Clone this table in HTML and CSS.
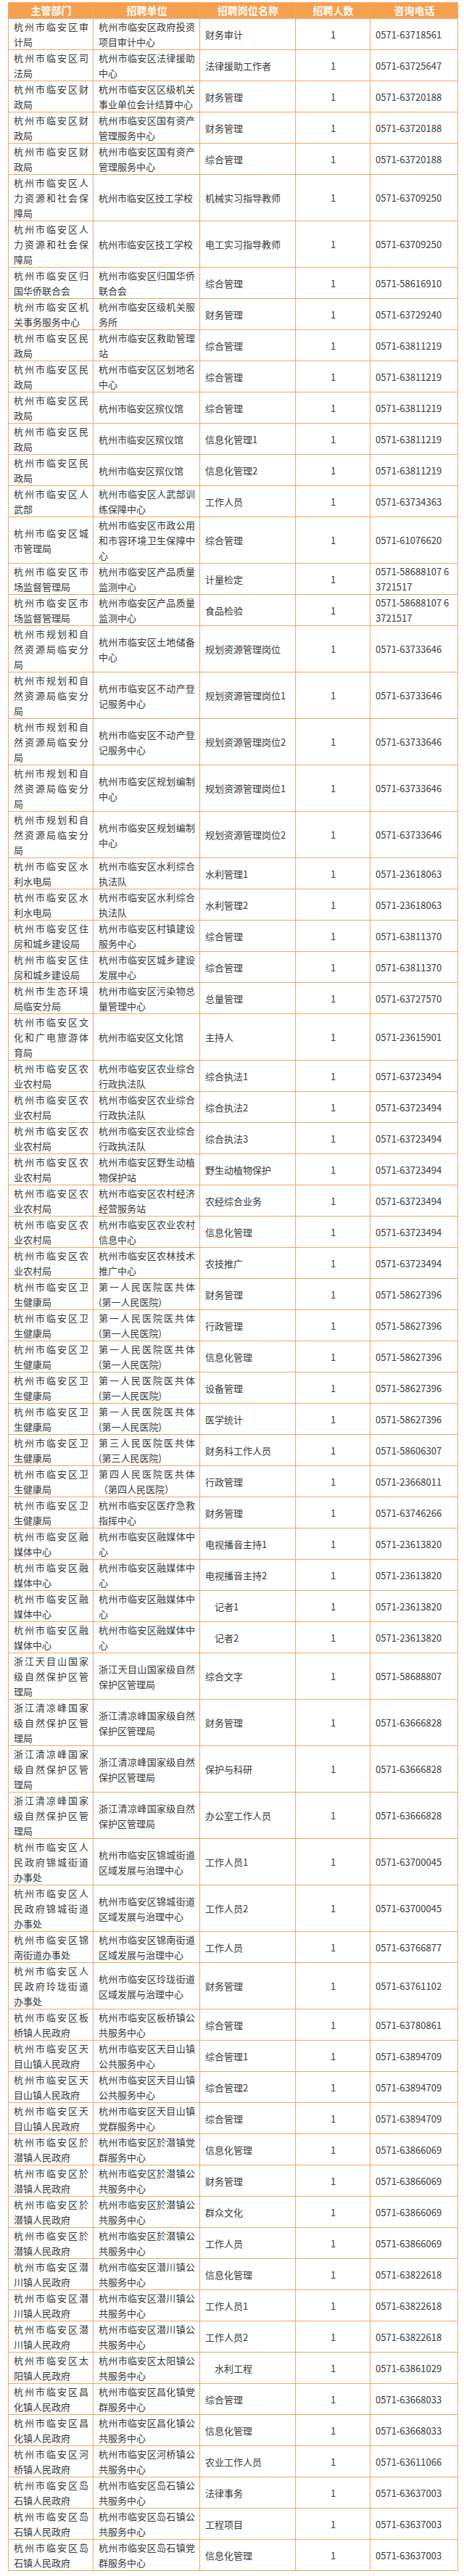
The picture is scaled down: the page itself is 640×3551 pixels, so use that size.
FILE: index.html
```html
<!DOCTYPE html>
<html lang="zh-CN">
<head>
<meta charset="utf-8">
<title>招聘岗位</title>
<link rel="stylesheet" href="styles.css">
</head>
<body>
<div class="wrap">
<table class="jobs">
<colgroup><col class="w1"><col class="w2"><col class="w3"><col class="w4"><col class="w5"></colgroup>
<thead>
<tr><th>主管部门</th><th>招聘单位</th><th>招聘岗位名称</th><th>招聘人数</th><th>咨询电话</th></tr>
</thead>
<tbody>
<tr><td>杭州市临安区审计局</td><td>杭州市临安区政府投资项目审计中心</td><td>财务审计</td><td>1</td><td>0571-63718561</td></tr>
<tr><td>杭州市临安区司法局</td><td>杭州市临安区法律援助中心</td><td>法律援助工作者</td><td>1</td><td>0571-63725647</td></tr>
<tr><td>杭州市临安区财政局</td><td>杭州市临安区区级机关事业单位会计结算中心</td><td>财务管理</td><td>1</td><td>0571-63720188</td></tr>
<tr><td>杭州市临安区财政局</td><td>杭州市临安区国有资产管理服务中心</td><td>财务管理</td><td>1</td><td>0571-63720188</td></tr>
<tr><td>杭州市临安区财政局</td><td>杭州市临安区国有资产管理服务中心</td><td>综合管理</td><td>1</td><td>0571-63720188</td></tr>
<tr><td>杭州市临安区人力资源和社会保障局</td><td>杭州市临安区技工学校</td><td>机械实习指导教师</td><td>1</td><td>0571-63709250</td></tr>
<tr><td>杭州市临安区人力资源和社会保障局</td><td>杭州市临安区技工学校</td><td>电工实习指导教师</td><td>1</td><td>0571-63709250</td></tr>
<tr><td>杭州市临安区归国华侨联合会</td><td>杭州市临安区归国华侨联合会</td><td>综合管理</td><td>1</td><td>0571-58616910</td></tr>
<tr><td>杭州市临安区机关事务服务中心</td><td>杭州市临安区级机关服务所</td><td>财务管理</td><td>1</td><td>0571-63729240</td></tr>
<tr><td>杭州市临安区民政局</td><td>杭州市临安区救助管理站</td><td>综合管理</td><td>1</td><td>0571-63811219</td></tr>
<tr><td>杭州市临安区民政局</td><td>杭州市临安区区划地名中心</td><td>综合管理</td><td>1</td><td>0571-63811219</td></tr>
<tr><td>杭州市临安区民政局</td><td>杭州市临安区殡仪馆</td><td>综合管理</td><td>1</td><td>0571-63811219</td></tr>
<tr><td>杭州市临安区民政局</td><td>杭州市临安区殡仪馆</td><td>信息化管理1</td><td>1</td><td>0571-63811219</td></tr>
<tr><td>杭州市临安区民政局</td><td>杭州市临安区殡仪馆</td><td>信息化管理2</td><td>1</td><td>0571-63811219</td></tr>
<tr><td>杭州市临安区人武部</td><td>杭州市临安区人武部训练保障中心</td><td>工作人员</td><td>1</td><td>0571-63734363</td></tr>
<tr><td>杭州市临安区城市管理局</td><td>杭州市临安区市政公用和市容环境卫生保障中心</td><td>综合管理</td><td>1</td><td>0571-61076620</td></tr>
<tr><td>杭州市临安区市场监督管理局</td><td>杭州市临安区产品质量监测中心</td><td>计量检定</td><td>1</td><td>0571-58688107 63721517</td></tr>
<tr><td>杭州市临安区市场监督管理局</td><td>杭州市临安区产品质量监测中心</td><td>食品检验</td><td>1</td><td>0571-58688107 63721517</td></tr>
<tr><td>杭州市规划和自然资源局临安分局</td><td>杭州市临安区土地储备中心</td><td>规划资源管理岗位</td><td>1</td><td>0571-63733646</td></tr>
<tr><td>杭州市规划和自然资源局临安分局</td><td>杭州市临安区不动产登记服务中心</td><td>规划资源管理岗位1</td><td>1</td><td>0571-63733646</td></tr>
<tr><td>杭州市规划和自然资源局临安分局</td><td>杭州市临安区不动产登记服务中心</td><td>规划资源管理岗位2</td><td>1</td><td>0571-63733646</td></tr>
<tr><td>杭州市规划和自然资源局临安分局</td><td>杭州市临安区规划编制中心</td><td>规划资源管理岗位1</td><td>1</td><td>0571-63733646</td></tr>
<tr><td>杭州市规划和自然资源局临安分局</td><td>杭州市临安区规划编制中心</td><td>规划资源管理岗位2</td><td>1</td><td>0571-63733646</td></tr>
<tr><td>杭州市临安区水利水电局</td><td>杭州市临安区水利综合执法队</td><td>水利管理1</td><td>1</td><td>0571-23618063</td></tr>
<tr><td>杭州市临安区水利水电局</td><td>杭州市临安区水利综合执法队</td><td>水利管理2</td><td>1</td><td>0571-23618063</td></tr>
<tr><td>杭州市临安区住房和城乡建设局</td><td>杭州市临安区村镇建设服务中心</td><td>综合管理</td><td>1</td><td>0571-63811370</td></tr>
<tr><td>杭州市临安区住房和城乡建设局</td><td>杭州市临安区城乡建设发展中心</td><td>综合管理</td><td>1</td><td>0571-63811370</td></tr>
<tr><td>杭州市生态环境局临安分局</td><td>杭州市临安区污染物总量管理中心</td><td>总量管理</td><td>1</td><td>0571-63727570</td></tr>
<tr><td>杭州市临安区文化和广电旅游体育局</td><td>杭州市临安区文化馆</td><td>主持人</td><td>1</td><td>0571-23615901</td></tr>
<tr><td>杭州市临安区农业农村局</td><td>杭州市临安区农业综合行政执法队</td><td>综合执法1</td><td>1</td><td>0571-63723494</td></tr>
<tr><td>杭州市临安区农业农村局</td><td>杭州市临安区农业综合行政执法队</td><td>综合执法2</td><td>1</td><td>0571-63723494</td></tr>
<tr><td>杭州市临安区农业农村局</td><td>杭州市临安区农业综合行政执法队</td><td>综合执法3</td><td>1</td><td>0571-63723494</td></tr>
<tr><td>杭州市临安区农业农村局</td><td>杭州市临安区野生动植物保护站</td><td>野生动植物保护</td><td>1</td><td>0571-63723494</td></tr>
<tr><td>杭州市临安区农业农村局</td><td>杭州市临安区农村经济经营服务站</td><td>农经综合业务</td><td>1</td><td>0571-63723494</td></tr>
<tr><td>杭州市临安区农业农村局</td><td>杭州市临安区农业农村信息中心</td><td>信息化管理</td><td>1</td><td>0571-63723494</td></tr>
<tr><td>杭州市临安区农业农村局</td><td>杭州市临安区农林技术推广中心</td><td>农技推广</td><td>1</td><td>0571-63723494</td></tr>
<tr><td>杭州市临安区卫生健康局</td><td>第一人民医院医共体(第一人民医院)</td><td>财务管理</td><td>1</td><td>0571-58627396</td></tr>
<tr><td>杭州市临安区卫生健康局</td><td>第一人民医院医共体(第一人民医院)</td><td>行政管理</td><td>1</td><td>0571-58627396</td></tr>
<tr><td>杭州市临安区卫生健康局</td><td>第一人民医院医共体(第一人民医院)</td><td>信息化管理</td><td>1</td><td>0571-58627396</td></tr>
<tr><td>杭州市临安区卫生健康局</td><td>第一人民医院医共体(第一人民医院)</td><td>设备管理</td><td>1</td><td>0571-58627396</td></tr>
<tr><td>杭州市临安区卫生健康局</td><td>第一人民医院医共体(第一人民医院)</td><td>医学统计</td><td>1</td><td>0571-58627396</td></tr>
<tr><td>杭州市临安区卫生健康局</td><td>第三人民医院医共体(第三人民医院)</td><td>财务科工作人员</td><td>1</td><td>0571-58606307</td></tr>
<tr><td>杭州市临安区卫生健康局</td><td>第四人民医院医共体（第四人民医院）</td><td>行政管理</td><td>1</td><td>0571-23668011</td></tr>
<tr><td>杭州市临安区卫生健康局</td><td>杭州市临安区医疗急救指挥中心</td><td>财务管理</td><td>1</td><td>0571-63746266</td></tr>
<tr><td>杭州市临安区融媒体中心</td><td>杭州市临安区融媒体中心</td><td>电视播音主持1</td><td>1</td><td>0571-23613820</td></tr>
<tr><td>杭州市临安区融媒体中心</td><td>杭州市临安区融媒体中心</td><td>电视播音主持2</td><td>1</td><td>0571-23613820</td></tr>
<tr><td>杭州市临安区融媒体中心</td><td>杭州市临安区融媒体中心</td><td>　记者1</td><td>1</td><td>0571-23613820</td></tr>
<tr><td>杭州市临安区融媒体中心</td><td>杭州市临安区融媒体中心</td><td>　记者2</td><td>1</td><td>0571-23613820</td></tr>
<tr><td>浙江天目山国家级自然保护区管理局</td><td>浙江天目山国家级自然保护区管理局</td><td>综合文字</td><td>1</td><td>0571-58688807</td></tr>
<tr><td>浙江清凉峰国家级自然保护区管理局</td><td>浙江清凉峰国家级自然保护区管理局</td><td>财务管理</td><td>1</td><td>0571-63666828</td></tr>
<tr><td>浙江清凉峰国家级自然保护区管理局</td><td>浙江清凉峰国家级自然保护区管理局</td><td>保护与科研</td><td>1</td><td>0571-63666828</td></tr>
<tr><td>浙江清凉峰国家级自然保护区管理局</td><td>浙江清凉峰国家级自然保护区管理局</td><td>办公室工作人员</td><td>1</td><td>0571-63666828</td></tr>
<tr><td>杭州市临安区人民政府锦城街道办事处</td><td>杭州市临安区锦城街道区域发展与治理中心</td><td>工作人员1</td><td>1</td><td>0571-63700045</td></tr>
<tr><td>杭州市临安区人民政府锦城街道办事处</td><td>杭州市临安区锦城街道区域发展与治理中心</td><td>工作人员2</td><td>1</td><td>0571-63700045</td></tr>
<tr><td>杭州市临安区锦南街道办事处</td><td>杭州市临安区锦南街道区域发展与治理中心</td><td>工作人员</td><td>1</td><td>0571-63766877</td></tr>
<tr><td>杭州市临安区人民政府玲珑街道办事处</td><td>杭州市临安区玲珑街道区域发展与治理中心</td><td>财务管理</td><td>1</td><td>0571-63761102</td></tr>
<tr><td>杭州市临安区板桥镇人民政府</td><td>杭州市临安区板桥镇公共服务中心</td><td>综合管理</td><td>1</td><td>0571-63780861</td></tr>
<tr><td>杭州市临安区天目山镇人民政府</td><td>杭州市临安区天目山镇公共服务中心</td><td>综合管理1</td><td>1</td><td>0571-63894709</td></tr>
<tr><td>杭州市临安区天目山镇人民政府</td><td>杭州市临安区天目山镇公共服务中心</td><td>综合管理2</td><td>1</td><td>0571-63894709</td></tr>
<tr><td>杭州市临安区天目山镇人民政府</td><td>杭州市临安区天目山镇党群服务中心</td><td>综合管理</td><td>1</td><td>0571-63894709</td></tr>
<tr><td>杭州市临安区於潜镇人民政府</td><td>杭州市临安区於潜镇党群服务中心</td><td>信息化管理</td><td>1</td><td>0571-63866069</td></tr>
<tr><td>杭州市临安区於潜镇人民政府</td><td>杭州市临安区於潜镇公共服务中心</td><td>财务管理</td><td>1</td><td>0571-63866069</td></tr>
<tr><td>杭州市临安区於潜镇人民政府</td><td>杭州市临安区於潜镇公共服务中心</td><td>群众文化</td><td>1</td><td>0571-63866069</td></tr>
<tr><td>杭州市临安区於潜镇人民政府</td><td>杭州市临安区於潜镇公共服务中心</td><td>工作人员</td><td>1</td><td>0571-63866069</td></tr>
<tr><td>杭州市临安区潜川镇人民政府</td><td>杭州市临安区潜川镇公共服务中心</td><td>信息化管理</td><td>1</td><td>0571-63822618</td></tr>
<tr><td>杭州市临安区潜川镇人民政府</td><td>杭州市临安区潜川镇公共服务中心</td><td>工作人员1</td><td>1</td><td>0571-63822618</td></tr>
<tr><td>杭州市临安区潜川镇人民政府</td><td>杭州市临安区潜川镇公共服务中心</td><td>工作人员2</td><td>1</td><td>0571-63822618</td></tr>
<tr><td>杭州市临安区太阳镇人民政府</td><td>杭州市临安区太阳镇公共服务中心</td><td>　水利工程</td><td>1</td><td>0571-63861029</td></tr>
<tr><td>杭州市临安区昌化镇人民政府</td><td>杭州市临安区昌化镇党群服务中心</td><td>综合管理</td><td>1</td><td>0571-63668033</td></tr>
<tr><td>杭州市临安区昌化镇人民政府</td><td>杭州市临安区昌化镇公共服务中心</td><td>信息化管理</td><td>1</td><td>0571-63668033</td></tr>
<tr><td>杭州市临安区河桥镇人民政府</td><td>杭州市临安区河桥镇公共服务中心</td><td>农业工作人员</td><td>1</td><td>0571-63611066</td></tr>
<tr><td>杭州市临安区岛石镇人民政府</td><td>杭州市临安区岛石镇公共服务中心</td><td>法律事务</td><td>1</td><td>0571-63637003</td></tr>
<tr><td>杭州市临安区岛石镇人民政府</td><td>杭州市临安区岛石镇公共服务中心</td><td>工程项目</td><td>1</td><td>0571-63637003</td></tr>
<tr><td>杭州市临安区岛石镇人民政府</td><td>杭州市临安区岛石镇党群服务中心</td><td>信息化管理</td><td>1</td><td>0571-63637003</td></tr>
</tbody>
</table>
</div>
</body>
</html>
```

FILE: styles.css
```css
html, body {
  margin: 0;
  padding: 0;
  background: #ffffff;
}

.wrap {
  padding: 3px 0 0 11px;
}

.jobs {
  border-collapse: collapse;
  table-layout: fixed;
  width: 620px;
  font-family: "Noto Sans CJK SC", "Noto Sans", sans-serif;
  font-size: 13px;
  line-height: 21px;
  color: #3a3a3a;
}

.w1 { width: 117px; }
.w2 { width: 147px; }
.w3 { width: 132px; }
.w4 { width: 103px; }
.w5 { width: 121px; }

.jobs th,
.jobs td {
  border: 1px solid #f3a766;
  padding: 0 6px 0 7px;
  vertical-align: middle;
}

.jobs th {
  background: #f5a04f;
  color: #ffffff;
  font-size: 14px;
  font-weight: bold;
  text-align: center;
  height: 21px;
}

.jobs td {
  text-align: left;
}

.jobs td:nth-child(1),
.jobs td:nth-child(2) {
  text-align: justify;
}

.jobs td:nth-child(4) {
  text-align: center;
}

.jobs td:nth-child(5) {
  word-break: break-all;
}
```
